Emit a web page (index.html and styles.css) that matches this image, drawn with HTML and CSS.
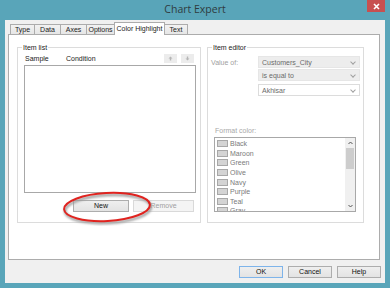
FILE: index.html
```html
<!DOCTYPE html>
<html>
<head>
<meta charset="utf-8">
<link rel="stylesheet" href="styles.css">
</head>
<body>
<div class="window">
  <div class="titlebar">
    <div class="title">Chart Expert</div>
    <div class="close"><svg width="7" height="7" viewBox="0 0 7 7"><path d="M1 1L6 6M6 1L1 6" stroke="#fff" stroke-width="1.6"/></svg></div>
  </div>
  <div class="client">
    <div class="tabs">
      <div class="tab w-type">Type</div>
      <div class="tab w-data">Data</div>
      <div class="tab w-axes">Axes</div>
      <div class="tab w-options">Options</div>
      <div class="tab active w-ch">Color Highlight</div>
      <div class="tab w-text">Text</div>
    </div>
    <div class="panel">
      <fieldset class="group itemlist">
        <legend>Item list</legend>
        <div class="listhead">
          <span class="h-sample">Sample</span>
          <span class="h-cond">Condition</span>
          <span class="arrows">
            <span class="arrowbtn"><svg width="5" height="5" viewBox="0 0 5 5"><path d="M2.5 0.5L0.5 2.5H1.8V4.5H3.2V2.5H4.5Z" fill="#b5b5b5"/></svg></span>
            <span class="arrowbtn"><svg width="5" height="5" viewBox="0 0 5 5"><path d="M2.5 4.5L0.5 2.5H1.8V0.5H3.2V2.5H4.5Z" fill="#b5b5b5"/></svg></span>
          </span>
        </div>
        <div class="listbox"></div>
        <div class="listbtns">
          <div class="btn newbtn">New</div>
          <div class="btn disabled removebtn">Remove</div>
        </div>
        <svg class="annot" width="100" height="38" viewBox="0 0 100 38">
          <defs><filter id="sh" x="-20%" y="-50%" width="140%" height="200%"><feGaussianBlur stdDeviation="1.2"/></filter></defs>
          <ellipse cx="50" cy="21" rx="43" ry="14" fill="none" stroke="#9a9a9a" stroke-width="2.5" filter="url(#sh)" transform="rotate(-3 50 21)"/>
          <ellipse cx="49" cy="19" rx="43" ry="14" fill="none" stroke="#e0231f" stroke-width="2" transform="rotate(-3 49 19)"/>
        </svg>
      </fieldset>
      <fieldset class="group itemeditor">
        <legend>Item editor</legend>
        <div class="row">
          <span class="lbl">Value of:</span>
          <div class="combo grey">Customers_City<span class="chev"></span></div>
        </div>
        <div class="row">
          <span class="lbl"></span>
          <div class="combo grey">is equal to<span class="chev"></span></div>
        </div>
        <div class="row row3">
          <span class="lbl"></span>
          <div class="combo white">Akhisar<span class="chev"></span></div>
        </div>
        <div class="fmtlbl">Format color:</div>
        <div class="colorlist">
          <div class="items">
            <div class="ci"><span class="sw"></span>Black</div>
            <div class="ci"><span class="sw"></span>Maroon</div>
            <div class="ci"><span class="sw"></span>Green</div>
            <div class="ci"><span class="sw"></span>Olive</div>
            <div class="ci"><span class="sw"></span>Navy</div>
            <div class="ci"><span class="sw"></span>Purple</div>
            <div class="ci"><span class="sw"></span>Teal</div>
            <div class="ci"><span class="sw"></span>Gray</div>
          </div>
          <div class="scroll">
            <div class="sarrow"><svg width="5" height="4" viewBox="0 0 5 4"><path d="M0.5 3L2.5 1L4.5 3" stroke="#555" stroke-width="1" fill="none"/></svg></div>
            <div class="thumb"></div>
            <div class="sfill"></div>
            <div class="sarrow"><svg width="5" height="4" viewBox="0 0 5 4"><path d="M0.5 1L2.5 3L4.5 1" stroke="#555" stroke-width="1" fill="none"/></svg></div>
          </div>
        </div>
      </fieldset>
    </div>
    <div class="footer">
      <div class="btn fbtn default">OK</div>
      <div class="btn fbtn">Cancel</div>
      <div class="btn fbtn">Help</div>
    </div>
  </div>
</div>
</body>
</html>
```
FILE: styles.css
```css
html, body { margin: 0; padding: 0; }
body { width: 390px; height: 288px; overflow: hidden; font-family: "Liberation Sans", Arial, sans-serif; font-size: 7px; color: #222; }
.window { width: 390px; height: 288px; box-sizing: border-box; background: #59a5b9; padding: 0 5px 5px 5px; display: flex; flex-direction: column; }
.titlebar { height: 20px; flex: none; display: flex; align-items: flex-start; position: relative; }
.title { flex: 1; text-align: center; font-family: "Open Sans", "Liberation Sans", sans-serif; font-size: 10.5px; color: #2f3b40; line-height: 18px; padding-left: 20px; }
.close { width: 18px; height: 12px; background: #c75050; display: flex; align-items: center; justify-content: center; margin-left: 2px; }
.client { flex: 1; background: #f0f0f0; padding: 2px 0 0 3px; box-sizing: border-box; display: flex; flex-direction: column; }
.tabs { display: flex; height: 12px; padding-left: 2px; align-items: flex-end; position: relative; z-index: 2; }
.tab { height: 10px; box-sizing: border-box; border: 1px solid #acacac; border-bottom: none; margin-right: -1px; background: linear-gradient(#f2f2f2, #e6e6e6); text-align: center; line-height: 10px; font-size: 7px; }
.tab.active { height: 13px; background: #fff; margin-bottom: -1px; line-height: 12px; position: relative; z-index: 3; }
.w-type { width: 25px; } .w-data { width: 27px; } .w-axes { width: 27px; } .w-options { width: 29px; } .w-ch { width: 51px; } .w-text { width: 24px; }
.panel { width: 372px; height: 226px; box-sizing: border-box; border: 1px solid #acacac; background: #fff; display: flex; padding: 8px 0 0 8px; gap: 6px; align-items: flex-start; }
.group { margin: 0; padding: 0; border: 1px solid #dcdcdc; box-sizing: border-box; position: relative; min-width: 0; }
.group legend { padding: 0 1px; margin-left: 4px; font-size: 7px; line-height: 9px; color: #222; }
.itemlist { width: 184px; height: 180px; }
.itemeditor { width: 157px; height: 180px; }
.listhead { display: flex; align-items: center; height: 10px; margin-top: 1px; padding-left: 7px; }
.h-sample { width: 41px; }
.h-cond { flex: 1; }
.arrows { display: flex; gap: 4px; margin-right: 6px; }
.arrowbtn { width: 13px; height: 9px; background: #ececec; display: flex; align-items: center; justify-content: center; }
.listbox { margin: 2px 0 0 6px; width: 172px; height: 128px; box-sizing: border-box; border: 1px solid #a8a8a8; background: #fff; }
.listbtns { display: flex; gap: 4px; margin: 7px 0 0 55px; }
.btn { height: 12px; box-sizing: border-box; border: 1px solid #adadad; background: linear-gradient(#efefef, #e3e3e3); text-align: center; line-height: 10px; font-size: 7px; color: #111; }
.newbtn { width: 56px; }
.removebtn { width: 61px; }
.btn.disabled { color: #a0a0a0; background: #f4f4f4; border-color: #d9d9d9; }
.annot { position: absolute; left: 40px; top: 136px; }
.row { display: flex; align-items: center; height: 12px; margin-bottom: 1px; }
.row3 { margin-top: 3px; }
.lbl { width: 50px; padding-left: 3px; color: #a0a0a0; box-sizing: border-box; }
.combo { width: 102px; height: 12px; box-sizing: border-box; position: relative; padding-left: 3px; line-height: 11px; color: #6a6a6a; }
.combo.grey { background: #ededed; border: 1px solid #e6e6e6; }
.combo.white { background: #fff; border: 1px solid #dcdcdc; }
.chev { position: absolute; right: 4px; top: 3px; width: 3px; height: 3px; border-right: 1px solid #a0a0a0; border-bottom: 1px solid #a0a0a0; transform: rotate(45deg); }
.itemeditor .row:first-of-type { margin-top: 4px; }
.fmtlbl { margin: 30px 0 0 7px; color: #a8a8a8; line-height: 9px; }
.colorlist { margin: 2px 0 0 6px; width: 142px; height: 75px; box-sizing: border-box; border: 1px solid #a8a8a8; display: flex; overflow: hidden; }
.items { flex: 1; padding-top: 1px; overflow: hidden; }
.ci { height: 9.6px; display: flex; align-items: center; color: #7a7a7a; padding-left: 2px; }
.sw { width: 11px; height: 7px; box-sizing: border-box; border: 1px solid #a8a8a8; background: #d4d4d4; margin-right: 2px; }
.scroll { width: 10px; background: #f0f0f0; display: flex; flex-direction: column; align-items: stretch; }
.sarrow { height: 10px; display: flex; align-items: center; justify-content: center; }
.thumb { height: 21px; margin: 0 1px; background: #cdcdcd; }
.sfill { flex: 1; }
.footer { display: flex; justify-content: flex-end; gap: 5px; margin-top: 6px; padding-right: 4px; }
.fbtn { width: 44px; }
.fbtn.default { border-color: #7eb4ea; }
```
